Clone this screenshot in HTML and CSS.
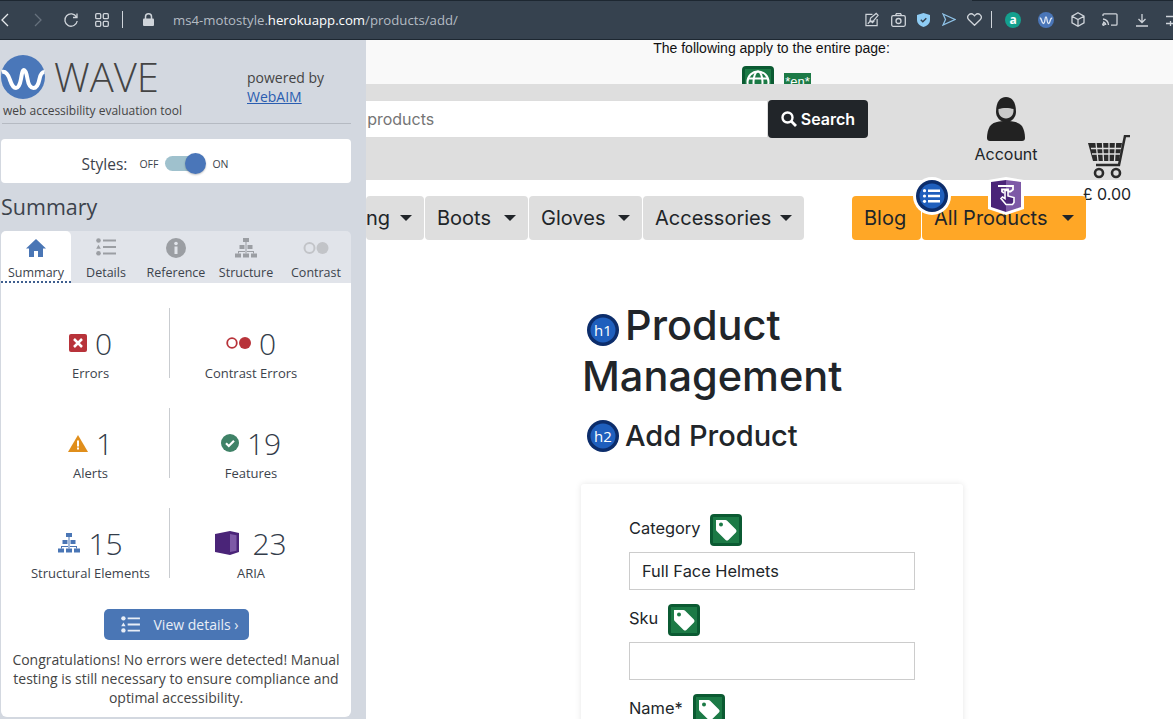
FILE: index.html
```html
<!DOCTYPE html>
<html>
<head>
  <meta charset="UTF-8">
  <title>Product Management</title>
  <link rel="stylesheet" href="styles.css">
</head>
<body>
<svg class="defs" width="0" height="0">
  <symbol id="tag" viewBox="0 0 32 32">
    <rect width="32" height="32" rx="4" fill="#0b5a32"/>
    <rect x="3" y="3" width="26" height="26" fill="#1c7a46"/>
    <path d="M6 6h9.500a2 2 0 0 1 1.400.600l9 9a2 2 0 0 1 0 2.800l-7.500 7.500a2 2 0 0 1-2.800 0l-9-9a2 2 0 0 1-.6-1.400V6z" fill="#fff"/>
    <circle cx="11" cy="10.500" r="2" fill="#1c7a46"/>
  </symbol>
  <symbol id="tree" viewBox="0 0 22 20">
    <path d="M8 0h6v4H8zM4.500 7h5v4h-5zM12.500 7h5v4h-5zM0 15.500h6v4H0zM8 15.500h6v4H8zM16 15.500h6v4h-6z" fill="currentColor"/>
    <path d="M10.500 4v11.500h1V4zM3 13h16v2.500h-1V14H4v1.500H3z" fill="currentColor"/>
  </symbol>
  <symbol id="list" viewBox="0 0 20 18">
    <circle cx="2.500" cy="2.500" r="2.300" fill="currentColor"/>
    <path d="M2.500 6.800l2.300 4H.2z" fill="currentColor"/>
    <circle cx="2.500" cy="15.300" r="2.300" fill="currentColor"/>
    <path d="M7 1.500h13v2H7zM7 8h13v2H7zM7 14.500h13v2H7z" fill="currentColor"/>
  </symbol>
</svg>

<div class="toolbar">
  <div class="tool-left">
    <svg class="ti nav-back" width="10" height="16" viewBox="0 0 10 16"><path d="M8 2L2 8l6 6"/></svg>
    <svg class="ti nav-fwd" width="10" height="16" viewBox="0 0 10 16"><path d="M2 2l6 6-6 6"/></svg>
    <svg class="ti nav-reload" width="16" height="16" viewBox="0 0 16 16"><path d="M13.500 5A6.200 6.200 0 1 0 14.200 9M14 1.500V5.500H10"/></svg>
    <svg class="ti nav-grid" width="14" height="14" viewBox="0 0 14 14"><rect x=".7" y=".7" width="5" height="5" rx="1"/><rect x="8.300" y=".7" width="5" height="5" rx="1"/><rect x=".7" y="8.300" width="5" height="5" rx="1"/><rect x="8.300" y="8.300" width="5" height="5" rx="1"/></svg>
    <span class="tool-sep"></span>
    <svg class="lock" width="11" height="13" viewBox="0 0 11 13"><path d="M2.500 6V3.800a3 3 0 0 1 6 0V6" fill="none" stroke="#cfd4da" stroke-width="1.500"/><rect y="5.500" width="11" height="7.500" rx="1" fill="#cfd4da"/></svg>
    <span class="url">ms4-motostyle.<b>herokuapp.com</b>/products/add/</span>
  </div>
  <div class="tool-right">
    <div class="tool-group">
      <svg class="ti" width="14" height="15" viewBox="0 0 15 15"><path d="M8 2H1v12h12V7M5 10l1-4 6-5 2 2-5 6zM3 12l3-3 2 2 2-2"/></svg>
      <svg class="ti" width="15" height="14" viewBox="0 0 15 14"><rect x=".7" y="2.700" width="13.600" height="10.600" rx="1.500"/><circle cx="7.500" cy="8" r="2.500"/><path d="M4.500 2.500l1-2h4l1 2"/></svg>
      <svg width="13" height="14" viewBox="0 0 13 14"><path d="M6.500 0L13 2v5c0 3.500-3 6-6.500 7C3 13 0 10.500 0 7V2z" fill="#8fcdf5"/><path d="M3.800 6.800l2 2 3.500-3.500" fill="none" stroke="#36424f" stroke-width="1.500"/></svg>
      <svg class="ti ti-send" width="14" height="13" viewBox="0 0 14 13"><path d="M1 1l12 5.500L1 12l2.500-5.500z"/></svg>
      <svg class="ti" width="15" height="13" viewBox="0 0 15 13"><path d="M7.500 12.300L1.800 6.700a3.400 3.400 0 0 1 0-4.800 3.400 3.400 0 0 1 4.800 0l.9.900.9-.9a3.400 3.400 0 0 1 4.800 0 3.400 3.400 0 0 1 0 4.800z"/></svg>
    </div>
    <span class="tool-sep"></span>
    <div class="tool-group tool-group-wide">
      <span class="ext-a">a</span>
      <svg class="ext-w" width="16" height="16" viewBox="0 0 16 16"><circle cx="8" cy="8" r="8" fill="#4a76b8"/><path d="M1.800 6c1 0 1.500 1 2 3s1 2.500 1.700 2.500S6.700 10 7 7.500 7.500 5 8 5s.8 1 1 2.500.6 4 1.500 4 1.200-1 1.700-3 1-2.500 2-2.500" fill="none" stroke="#dfe8f5" stroke-width="1.300"/></svg>
      <svg class="ti" width="14" height="15" viewBox="0 0 14 15"><path d="M7 .8l6 3.400v6.600l-6 3.400-6-3.400V4.200zM1 4.200l6 3.400 6-3.400M7 7.600v6.600"/></svg>
      <svg class="ti" width="16" height="13" viewBox="0 0 16 13"><path d="M1 3V1.800A1 1 0 0 1 2 .8h12a1 1 0 0 1 1 1v9.400a1 1 0 0 1-1 1H9M1 6a6.500 6.500 0 0 1 5.500 6M1 9a3.500 3.500 0 0 1 2.800 3"/><circle cx="1.500" cy="11.500" r=".8"/></svg>
      <svg class="ti" width="14" height="14" viewBox="0 0 14 14"><path d="M7 1v8.500M3.500 6L7 9.500 10.500 6M1 13h12"/></svg>
      <svg class="ti" width="14" height="14" viewBox="0 0 14 14"><path d="M0 3.500h14M0 10.500h14M9.500 1v5M4.500 8v5"/></svg>
    </div>
  </div>
</div>

<div class="layout">
  <aside class="wave">
    <div class="wave-head">
      <div class="wave-brand">
        <div class="wave-logo-row">
          <svg width="44" height="44" viewBox="0 0 44 44"><circle cx="22" cy="22" r="22" fill="#4a77b9"/><path d="M1 17c4-1 6 2 8 8s4 8 6 8 4-3 5-9 1.500-9 3-9 2.500 3 3.500 9 3 9 6 9 5-4 6-9 3-7 5-7" fill="none" stroke="#fff" stroke-width="4"/></svg>
          <span class="wave-name">WAVE</span>
        </div>
        <div class="wave-sub">web accessibility evaluation tool</div>
      </div>
      <div class="wave-powered">powered by<br><a href="#">WebAIM</a></div>
    </div>

    <div class="styles-card">
      <span class="styles-label">Styles:</span>
      <span class="toggle-txt">OFF</span>
      <span class="toggle"><span class="knob"></span></span>
      <span class="toggle-txt">ON</span>
    </div>

    <div class="wave-title">Summary</div>

    <div class="wave-tabs">
      <div class="wave-tab active">
        <svg class="tab-icon" width="22" height="20" viewBox="0 0 22 20"><path d="M11 1L1 10.500h3V19h5v-6h4v6h5v-8.500h3z" fill="#4a76b5"/></svg>
        <span>Summary</span>
      </div>
      <div class="wave-tab">
        <svg class="tab-icon" width="20" height="18"><use href="#list"/></svg>
        <span>Details</span>
      </div>
      <div class="wave-tab">
        <svg class="tab-icon" width="20" height="20" viewBox="0 0 20 20"><circle cx="10" cy="10" r="10" fill="currentColor"/><rect x="8.500" y="8.500" width="3" height="7.500" fill="#e1e4ea"/><circle cx="10" cy="5.500" r="1.800" fill="#e1e4ea"/></svg>
        <span>Reference</span>
      </div>
      <div class="wave-tab">
        <svg class="tab-icon" width="22" height="20"><use href="#tree"/></svg>
        <span>Structure</span>
      </div>
      <div class="wave-tab tab-faint">
        <svg class="tab-icon" width="26" height="12" viewBox="0 0 26 12"><circle cx="6.500" cy="6" r="5" fill="none" stroke="currentColor" stroke-width="2"/><circle cx="19.500" cy="6" r="6" fill="currentColor"/></svg>
        <span>Contrast</span>
      </div>
    </div>

    <div class="wave-panel">
      <div class="stats">
        <div class="stat">
          <div class="stat-top">
            <svg width="18" height="18" viewBox="0 0 18 18"><rect width="18" height="18" rx="2" fill="#b8333a"/><path d="M5 5l8 8M13 5l-8 8" stroke="#fff" stroke-width="2.500"/></svg>
            <span class="stat-num">0</span>
          </div>
          <div class="stat-label">Errors</div>
        </div>
        <div class="stat">
          <div class="stat-top">
            <svg width="25" height="12" viewBox="0 0 25 12"><circle cx="6" cy="6" r="4.800" fill="none" stroke="#b8333a" stroke-width="1.800"/><circle cx="19" cy="6" r="6" fill="#b8333a"/></svg>
            <span class="stat-num">0</span>
          </div>
          <div class="stat-label">Contrast Errors</div>
        </div>
        <div class="stat">
          <div class="stat-top">
            <svg width="20" height="17" viewBox="0 0 20 17"><path d="M10 0l10 17H0z" fill="#e08e1b"/><rect x="9" y="5.500" width="2" height="6" fill="#fff"/><rect x="9" y="12.500" width="2" height="2" fill="#fff"/></svg>
            <span class="stat-num">1</span>
          </div>
          <div class="stat-label">Alerts</div>
        </div>
        <div class="stat">
          <div class="stat-top">
            <svg width="18" height="18" viewBox="0 0 18 18"><circle cx="9" cy="9" r="9" fill="#3f8267"/><path d="M5 9.300l2.800 2.700L13 6.800" fill="none" stroke="#fff" stroke-width="2.200"/></svg>
            <span class="stat-num">19</span>
          </div>
          <div class="stat-label">Features</div>
        </div>
        <div class="stat">
          <div class="stat-top">
            <svg class="tree-blue" width="22" height="20"><use href="#tree"/></svg>
            <span class="stat-num">15</span>
          </div>
          <div class="stat-label">Structural Elements</div>
        </div>
        <div class="stat">
          <div class="stat-top stat-aria">
            <svg width="24" height="24" viewBox="0 0 24 24"><path d="M0 3l15-3v24L0 21z" fill="#4a2478"/><path d="M15 0l9 2v19l-9 3z" fill="#4a2478"/><path d="M15 3l6.500 1.200v15.500L15 21z" fill="#7d59a6"/></svg>
            <span class="stat-num">23</span>
          </div>
          <div class="stat-label">ARIA</div>
        </div>
      </div>
      <a class="details-btn" href="#">
        <svg width="19" height="17"><use href="#list"/></svg>
        <span>View details ›</span>
      </a>
      <p class="wave-msg">Congratulations! No errors were detected! Manual testing is still necessary to ensure compliance and optimal accessibility.</p>
    </div>
  </aside>

  <main class="page">
    <div class="page-note">
      <div>The following apply to the entire page:</div>
      <div class="note-icons">
        <svg width="32" height="32" viewBox="0 0 32 32"><rect width="32" height="32" rx="4" fill="#0b5a32"/><rect x="3" y="3" width="26" height="26" fill="#1c7a46"/><g fill="none" stroke="#fff" stroke-width="2"><circle cx="16" cy="16" r="10.500"/><ellipse cx="16" cy="16" rx="4.500" ry="10.500"/><path d="M6 12.500h20M6 19.500h20"/></g></svg>
        <span class="lang-tag">*en*</span>
      </div>
    </div>

    <div class="band">
      <div class="search">
        <input class="search-input" type="text" placeholder="Search our products">
        <button class="search-btn">
          <svg width="16" height="16" viewBox="0 0 16 16"><circle cx="6.500" cy="6.500" r="5" fill="none" stroke="#fff" stroke-width="2.400"/><path d="M10.300 10.300L15 15" stroke="#fff" stroke-width="2.800"/></svg>
          Search
        </button>
      </div>
      <div class="account">
        <svg width="38" height="44" viewBox="0 0 38 44"><path d="M9 15C9 5 13 0 19 0s10 5 10 15c0 5-4 10-10 10S9 20 9 15z" fill="#222"/><path d="M11.500 12c4-1.500 11-1.500 15 0 .5 6-3 9.500-7.500 9.500S11 18 11.500 12z" fill="#c9c9c9"/><path d="M4 28c3-3 8-4 15-4s12 1 15 4c3 3 4 9 4 13 0 2-1 3-3 3H3c-2 0-3-1-3-3 0-4 1-10 4-13z" fill="#222"/></svg>
        <span>Account</span>
      </div>
      <div class="cart">
        <svg width="44" height="44" viewBox="0 0 44 44"><path d="M43 1h-5l-6 29H9" fill="none" stroke="#2b2b2b" stroke-width="2.500"/><path d="M1 8h34l-3 18H6z" fill="#2b2b2b"/><path d="M4 13.500h30M5 19h28M9 8l2 18M15.500 8l1 18M22 8v18M28.500 8l-1 18" stroke="#dedede" stroke-width="1.300"/><circle cx="12" cy="38" r="4" fill="none" stroke="#2b2b2b" stroke-width="2.600"/><circle cx="29" cy="38" r="4" fill="none" stroke="#2b2b2b" stroke-width="2.600"/></svg>
        <span>£ 0.00</span>
      </div>
    </div>

    <nav class="nav">
      <a class="nav-item nav-first">Clothing <i class="caret"></i></a>
      <a class="nav-item nav-boots">Boots <i class="caret"></i></a>
      <a class="nav-item nav-gloves">Gloves <i class="caret"></i></a>
      <a class="nav-item nav-acc">Accessories <i class="caret"></i></a>
      <a class="nav-item nav-orange nav-blog">Blog</a>
      <a class="nav-item nav-orange nav-all">All Products <i class="caret"></i>
        <svg class="badge badge-list" width="38" height="38" viewBox="0 0 38 38"><circle cx="19" cy="19" r="19" fill="#fff"/><circle cx="19" cy="19" r="16" fill="#0c2d6b"/><circle cx="19" cy="19" r="12.500" fill="#1f5fbd"/><path d="M15 12.500h12v2.400H15zM15 17.800h12v2.400H15zM15 23.100h12v2.400H15z" fill="#fff"/><circle cx="11.500" cy="13.700" r="1.600" fill="#fff"/><circle cx="11.500" cy="19" r="1.600" fill="#fff"/><circle cx="11.500" cy="24.300" r="1.600" fill="#fff"/></svg>
        <svg class="badge badge-aria" width="38" height="38" viewBox="0 0 38 38"><path d="M1 3l18-3 18 3v29l-18 6-18-6z" fill="#fff"/><path d="M4 5l15-2v32L4 30z" fill="#4a2478"/><path d="M19 3l15 2v25l-15 5z" fill="#7d59a6"/><path d="M11 9h15v3.500l-2.500 2H21v-2h-6v2l2 1.500" fill="none" stroke="#fff" stroke-width="1.800"/><path d="M18 13.500v8l-2.500-1.500-1.500 1.500 5 6h6.500l1.500-2v-5l-6-1.500v-5.500z" fill="#4a2478" stroke="#fff" stroke-width="1.600"/></svg>
      </a>
    </nav>

    <div class="content">
      <h1><svg class="head-badge" width="32" height="32" viewBox="0 0 32 32"><circle cx="16" cy="16" r="16" fill="#0c2d6b"/><circle cx="16" cy="16" r="12.500" fill="#1f5fbd"/><text x="16" y="21.500" text-anchor="middle" class="head-badge-txt">h1</text></svg>Product Management</h1>
      <h2><svg class="head-badge" width="32" height="32" viewBox="0 0 32 32"><circle cx="16" cy="16" r="16" fill="#0c2d6b"/><circle cx="16" cy="16" r="12.500" fill="#1f5fbd"/><text x="16" y="21.500" text-anchor="middle" class="head-badge-txt">h2</text></svg>Add Product</h2>

      <form class="card">
        <div class="field">
          <label>Category <svg width="32" height="32"><use href="#tag"/></svg></label>
          <div class="input">Full Face Helmets</div>
        </div>
        <div class="field">
          <label>Sku <svg width="32" height="32"><use href="#tag"/></svg></label>
          <div class="input"></div>
        </div>
        <div class="field">
          <label>Name* <svg width="32" height="32"><use href="#tag"/></svg></label>
          <div class="input"></div>
        </div>
      </form>
    </div>
  </main>
</div>
</body>
</html>
```

FILE: styles.css
```css
* {
  box-sizing: border-box;
}

html,
body {
  margin: 0;
  height: 100%;
  overflow: hidden;
}

body {
  font-family: "Open Sans", sans-serif;
  background-color: #fff;
}

.defs {
  position: absolute;
}

/* browser bar */
.toolbar {
  display: flex;
  justify-content: space-between;
  align-items: center;
  height: 40px;
  background: linear-gradient(to right, #1d2731 900px, #36424f 900px, #36424f 972px, #1d2731 972px) top / 100% 1px no-repeat, #36424f;
  border-bottom: 1px solid #1d2731;
}

.tool-left {
  display: flex;
  align-items: center;
}

.tool-right {
  display: flex;
  align-items: center;
  gap: 9px;
  margin-right: -7px;
}

.tool-group {
  display: flex;
  align-items: center;
  gap: 11.500px;
}

.tool-group-wide {
  gap: 17px;
  margin-left: 4px;
}

.ti {
  fill: none;
  stroke: #cfd4da;
  stroke-width: 1.300;
}

.ti-send {
  stroke: #8fc3e8;
}

.nav-back {
  stroke: #e6e9ec;
}

.nav-fwd {
  margin-left: 23px;
  stroke: #66717d;
}

.nav-reload {
  margin-left: 20px;
}

.nav-grid {
  margin-left: 16px;
}

.tool-sep {
  display: block;
  width: 1px;
  height: 17px;
  background-color: #cfd4da;
}

.tool-left .tool-sep {
  margin-left: 13px;
}

.lock {
  margin-left: 20px;
}

.url {
  margin-left: 19px;
  font-size: 13.200px;
  color: #b4bbc3;
}

.url b {
  font-weight: 400;
  color: #fff;
}

.ext-a {
  display: flex;
  justify-content: center;
  align-items: center;
  width: 16px;
  height: 16px;
  border-radius: 50%;
  background-color: #14a08e;
  color: #fff;
  font-size: 12px;
  font-weight: 700;
}

.layout {
  display: grid;
  grid-template-columns: 366px 1fr;
  height: 679px;
}

/* wave sidebar */
.wave {
  background-color: #d3d8e0;
  padding: 0 15px 0 1px;
  color: #3c434c;
  overflow: hidden;
  position: relative;
  z-index: 2;
}

.wave-head {
  display: flex;
  height: 84px;
  padding-top: 15px;
  border-bottom: 1px solid #b5bac2;
  margin-left: 1px;
}

.wave-brand {
  width: 245px;
}

.wave-logo-row {
  display: flex;
  align-items: center;
  height: 44px;
  margin-left: -1px;
}

.wave-name {
  margin-left: 9px;
  font-size: 40px;
  font-weight: 300;
  color: #444;
  line-height: 44px;
}

.wave-sub {
  margin: 3px 0 0 1px;
  font-size: 12px;
  color: #444;
  line-height: 18px;
}

.wave-powered {
  margin-top: 13px;
  font-size: 14px;
  line-height: 19px;
  color: #444;
}

.wave-powered a {
  color: #2a5db0;
}

.styles-card {
  display: flex;
  align-items: center;
  justify-content: center;
  height: 44px;
  margin-top: 15px;
  padding: 5px 42px 0 0;
  background-color: #fff;
  border-radius: 4px;
}

.styles-label {
  margin-right: 12px;
  font-size: 15.500px;
}

.toggle-txt {
  font-size: 10.500px;
}

.toggle {
  position: relative;
  display: block;
  width: 38px;
  height: 15px;
  margin: 0 9px 0 7px;
  border-radius: 8px;
  background-color: #9fc1cd;
}

.knob {
  position: absolute;
  top: -3px;
  right: -3px;
  width: 21px;
  height: 21px;
  border-radius: 50%;
  background-color: #4a76b9;
  box-shadow: 0 1px 2px rgba(0, 0, 0, 0.25);
}

.wave-title {
  margin: 8px 0;
  font-size: 21.500px;
  line-height: 32px;
}

.wave-tabs {
  display: grid;
  grid-template-columns: repeat(5, 70px);
  height: 52px;
  background-color: #e1e4ea;
  border-radius: 5px 5px 0 0;
}

.wave-tab {
  display: flex;
  flex-direction: column;
  align-items: center;
  font-size: 12.500px;
  color: #3c434c;
  white-space: nowrap;
}

.wave-tab span {
  position: absolute;
  margin-top: 33px;
}

.tab-icon {
  margin-top: 7px;
  color: #9b9ea3;
}

.tab-faint .tab-icon {
  margin-top: 11px;
  color: #c2c4c8;
}

.active {
  background-color: #fff;
  border-radius: 5px 5px 0 0;
  border-bottom: 2px dotted #3f5f8f;
}

.wave-panel {
  height: 434px;
  padding-top: 25px;
  background-color: #fff;
  border-radius: 0 0 6px 6px;
}

.stats {
  display: grid;
  grid-template-columns: 158px 182px;
  grid-auto-rows: 70px;
  row-gap: 30px;
  margin-left: 11px;
}

.stat {
  display: flex;
  flex-direction: column;
  align-items: center;
  padding-top: 16px;
  text-align: center;
}

.stat:nth-child(odd) {
  border-right: 1px solid #c9ccd0;
}

.stat:nth-child(even) {
  padding-right: 20px;
}

.stat-top {
  display: flex;
  align-items: center;
  gap: 8px;
  height: 38px;
}

.stat-aria {
  gap: 13px;
}

.stat-num {
  font-size: 30px;
  font-weight: 300;
  color: #333c4a;
}

.stat-label {
  margin-top: 2px;
  font-size: 13px;
  line-height: 18px;
}

.tree-blue {
  color: #4a76b5;
}

.details-btn {
  display: flex;
  align-items: center;
  gap: 14px;
  width: 145px;
  height: 31px;
  margin: 31px auto 0;
  padding-left: 17px;
  background-color: #4a76b5;
  border-radius: 5px;
  color: #e8eef7;
  font-size: 14px;
  text-decoration: none;
}

.wave-msg {
  margin: 10px 8px 0;
  font-size: 14px;
  line-height: 19px;
  text-align: center;
  color: #444;
}

/* the page under test */
.page {
  overflow: hidden;
  font-family: Inter, "Noto Sans", sans-serif;
  color: #212529;
}

.page-note {
  height: 44px;
  padding-left: 4px;
  overflow: hidden;
  background-color: #f9f9f9;
  font-family: "Liberation Sans", sans-serif;
  font-size: 14px;
  line-height: 17px;
  text-align: center;
  color: #111;
}

.note-icons {
  display: flex;
  justify-content: center;
  align-items: flex-start;
  gap: 10px;
  margin-top: 9px;
  padding-left: 10px;
}

.lang-tag {
  margin-top: 7px;
  padding: 0 1px;
  background-color: #1c7a46;
  color: #fff;
  font-size: 13px;
}

.band {
  display: flex;
  height: 96px;
  background-color: #dedede;
}

.search {
  display: flex;
  width: 502px;
  height: 38px;
  margin-top: 16px;
  flex: none;
}

.search-input {
  width: 500px;
  height: 38px;
  margin-left: -98px;
  padding: 0 0 0 12px;
  border: 1px solid #ddd;
  border-left: 0;
  font-family: inherit;
  font-size: 16px;
  flex: none;
}

.search-btn {
  display: flex;
  align-items: center;
  justify-content: center;
  gap: 4px;
  width: 100px;
  height: 38px;
  border: 0;
  border-radius: 4px;
  background-color: #212529;
  color: #fff;
  font-family: inherit;
  font-size: 16px;
  font-weight: 600;
  flex: none;
}

.account {
  display: flex;
  flex-direction: column;
  align-items: center;
  width: 100px;
  margin: 13px 0 0 88px;
  font-size: 16px;
  flex: none;
}

.account span {
  margin-top: 3px;
}

.account svg,
.cart svg {
  flex: none;
}

.cart {
  display: flex;
  flex-direction: column;
  align-items: center;
  width: 60px;
  margin: 51px 0 0 23px;
  font-size: 16px;
  white-space: nowrap;
  flex: none;
}

.cart span {
  margin-top: 5px;
  margin-left: -4px;
}

.nav {
  display: flex;
  gap: 1px;
  margin-top: 16px;
  white-space: nowrap;
}

.nav-item {
  display: flex;
  align-items: center;
  height: 44px;
  padding: 0 12px;
  background-color: #dedede;
  border-radius: 4px;
  font-size: 20px;
  flex: none;
}

.nav-first {
  width: 58px;
  justify-content: flex-end;
  padding-left: 0;
  overflow: hidden;
}

.nav-boots {
  width: 103px;
}

.nav-gloves {
  width: 113px;
}

.nav-acc {
  width: 161px;
}

.caret {
  display: block;
  width: 0;
  height: 0;
  margin-left: auto;
  border-top: 6px solid #212529;
  border-left: 6px solid transparent;
  border-right: 6px solid transparent;
}

.nav-first .caret {
  margin-left: 10px;
}

.nav-orange {
  background-color: #ffa726;
}

.nav-blog {
  width: 69px;
  margin-left: 47px;
}

.nav-all {
  position: relative;
  width: 164px;
}

.badge {
  position: absolute;
  top: -19px;
}

.badge-list {
  left: -9px;
}

.badge-aria {
  left: 65px;
}

.content {
  width: 382px;
  margin: 60px 0 0 215px;
}

.content h1 {
  width: 290px;
  margin: 0;
  padding-left: 1px;
  font-size: 41.500px;
  font-weight: 500;
  line-height: 51px;
}

.content h2 {
  width: 300px;
  height: 44px;
  margin: 12px 0 0;
  padding-left: 1px;
  font-size: 29px;
  font-weight: 500;
  line-height: 44px;
}

.head-badge {
  margin: 0 6px 0 5px;
  vertical-align: -6px;
}

.head-badge-txt {
  font-family: "Open Sans", sans-serif;
  font-size: 15px;
  fill: #fff;
}

.card {
  margin-top: 26px;
  padding: 30px 48px 0;
  height: 300px;
  background-color: #fff;
  box-shadow: 0 0 6px rgba(0, 0, 0, 0.1);
  border-radius: 3px;
}

.field {
  margin-bottom: 14px;
}

.field label {
  display: flex;
  align-items: center;
  gap: 10px;
  height: 32px;
  margin-bottom: 6px;
  padding-bottom: 4px;
  font-size: 16.400px;
}

.field label svg {
  margin-bottom: -4px;
}

.input {
  height: 38px;
  padding: 0 12px;
  border: 1px solid #ccc;
  font-size: 16.400px;
  line-height: 36px;
}
```
